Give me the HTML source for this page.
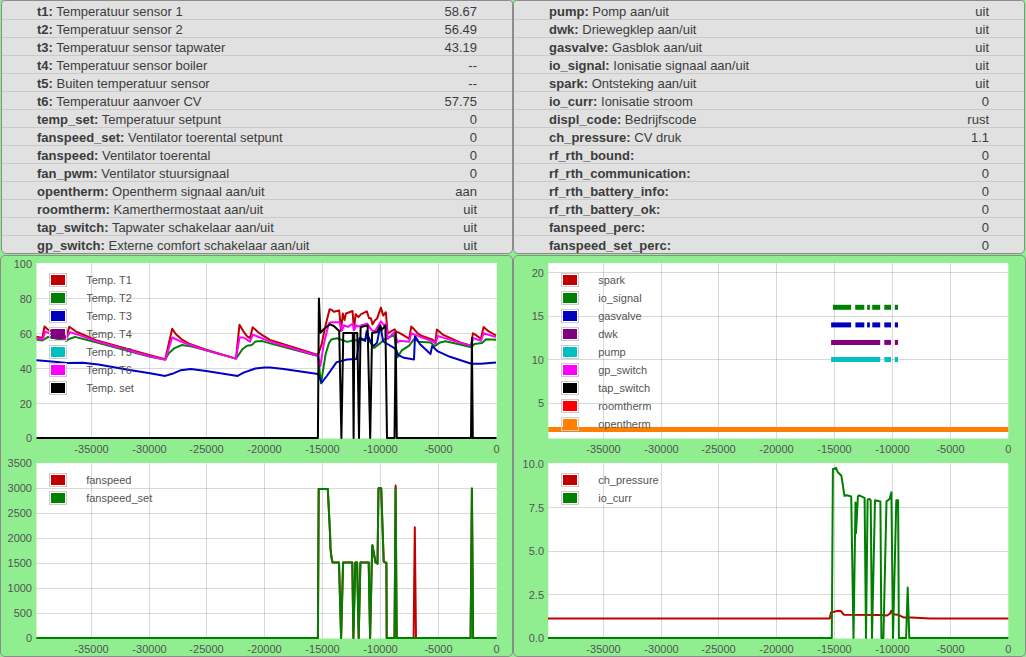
<!DOCTYPE html>
<html><head><meta charset="utf-8"><title>OTGW</title>
<style>
html,body{margin:0;padding:0;width:1026px;height:657px;overflow:hidden;background:#90ee90;}
svg{position:absolute;left:0;top:0;display:block}
.tb{font-family:"Liberation Sans", sans-serif;font-size:13px;fill:#3c3c3c;}
.tk{font-family:"Liberation Sans", sans-serif;font-size:11px;fill:#545454;}
.lg{font-family:"Liberation Sans", sans-serif;font-size:11px;fill:#545454;}
</style></head><body>
<svg width="1026" height="657" viewBox="0 0 1026 657">

<path d="M4.5,0.5 H509.5 Q512.5,0.5 512.5,3.5 V249.0 A4.5,4.5 0 0 1 508.0,253.5 H6.0 A4.5,4.5 0 0 1 1.5,249.0 V3.5 Q1.5,0.5 4.5,0.5 Z" fill="#e1e1e1" stroke="#8c8c8c"/>
<path d="M516.5,0.5 H1021.5 Q1024.5,0.5 1024.5,3.5 V249.0 A4.5,4.5 0 0 1 1020.0,253.5 H518.0 A4.5,4.5 0 0 1 513.5,249.0 V3.5 Q513.5,0.5 516.5,0.5 Z" fill="#e1e1e1" stroke="#8c8c8c"/>
<rect x="0.5" y="255.5" width="512" height="401" rx="4.5" fill="#90ee90" stroke="#8c8c8c"/>
<rect x="513.5" y="255.5" width="512" height="401" rx="4.5" fill="#90ee90" stroke="#8c8c8c"/>
<line x1="2" x2="512" y1="19.5" y2="19.5" stroke="#cacaca"/>
<line x1="514" x2="1024" y1="19.5" y2="19.5" stroke="#cacaca"/>
<line x1="2" x2="512" y1="37.5" y2="37.5" stroke="#cacaca"/>
<line x1="514" x2="1024" y1="37.5" y2="37.5" stroke="#cacaca"/>
<line x1="2" x2="512" y1="55.5" y2="55.5" stroke="#cacaca"/>
<line x1="514" x2="1024" y1="55.5" y2="55.5" stroke="#cacaca"/>
<line x1="2" x2="512" y1="73.5" y2="73.5" stroke="#cacaca"/>
<line x1="514" x2="1024" y1="73.5" y2="73.5" stroke="#cacaca"/>
<line x1="2" x2="512" y1="91.5" y2="91.5" stroke="#cacaca"/>
<line x1="514" x2="1024" y1="91.5" y2="91.5" stroke="#cacaca"/>
<line x1="2" x2="512" y1="109.5" y2="109.5" stroke="#cacaca"/>
<line x1="514" x2="1024" y1="109.5" y2="109.5" stroke="#cacaca"/>
<line x1="2" x2="512" y1="127.5" y2="127.5" stroke="#cacaca"/>
<line x1="514" x2="1024" y1="127.5" y2="127.5" stroke="#cacaca"/>
<line x1="2" x2="512" y1="145.5" y2="145.5" stroke="#cacaca"/>
<line x1="514" x2="1024" y1="145.5" y2="145.5" stroke="#cacaca"/>
<line x1="2" x2="512" y1="163.5" y2="163.5" stroke="#cacaca"/>
<line x1="514" x2="1024" y1="163.5" y2="163.5" stroke="#cacaca"/>
<line x1="2" x2="512" y1="181.5" y2="181.5" stroke="#cacaca"/>
<line x1="514" x2="1024" y1="181.5" y2="181.5" stroke="#cacaca"/>
<line x1="2" x2="512" y1="199.5" y2="199.5" stroke="#cacaca"/>
<line x1="514" x2="1024" y1="199.5" y2="199.5" stroke="#cacaca"/>
<line x1="2" x2="512" y1="217.5" y2="217.5" stroke="#cacaca"/>
<line x1="514" x2="1024" y1="217.5" y2="217.5" stroke="#cacaca"/>
<line x1="2" x2="512" y1="235.5" y2="235.5" stroke="#cacaca"/>
<line x1="514" x2="1024" y1="235.5" y2="235.5" stroke="#cacaca"/>
<text x="37" y="15.6" class="tb"><tspan font-weight="bold">t1:</tspan> Temperatuur sensor 1</text>
<text x="477" y="15.6" class="tb" text-anchor="end">58.67</text>
<text x="37" y="33.6" class="tb"><tspan font-weight="bold">t2:</tspan> Temperatuur sensor 2</text>
<text x="477" y="33.6" class="tb" text-anchor="end">56.49</text>
<text x="37" y="51.6" class="tb"><tspan font-weight="bold">t3:</tspan> Temperatuur sensor tapwater</text>
<text x="477" y="51.6" class="tb" text-anchor="end">43.19</text>
<text x="37" y="69.6" class="tb"><tspan font-weight="bold">t4:</tspan> Temperatuur sensor boiler</text>
<text x="477" y="69.6" class="tb" text-anchor="end">--</text>
<text x="37" y="87.6" class="tb"><tspan font-weight="bold">t5:</tspan> Buiten temperatuur sensor</text>
<text x="477" y="87.6" class="tb" text-anchor="end">--</text>
<text x="37" y="105.6" class="tb"><tspan font-weight="bold">t6:</tspan> Temperatuur aanvoer CV</text>
<text x="477" y="105.6" class="tb" text-anchor="end">57.75</text>
<text x="37" y="123.6" class="tb"><tspan font-weight="bold">temp_set:</tspan> Temperatuur setpunt</text>
<text x="477" y="123.6" class="tb" text-anchor="end">0</text>
<text x="37" y="141.6" class="tb"><tspan font-weight="bold">fanspeed_set:</tspan> Ventilator toerental setpunt</text>
<text x="477" y="141.6" class="tb" text-anchor="end">0</text>
<text x="37" y="159.6" class="tb"><tspan font-weight="bold">fanspeed:</tspan> Ventilator toerental</text>
<text x="477" y="159.6" class="tb" text-anchor="end">0</text>
<text x="37" y="177.6" class="tb"><tspan font-weight="bold">fan_pwm:</tspan> Ventilator stuursignaal</text>
<text x="477" y="177.6" class="tb" text-anchor="end">0</text>
<text x="37" y="195.6" class="tb"><tspan font-weight="bold">opentherm:</tspan> Opentherm signaal aan/uit</text>
<text x="477" y="195.6" class="tb" text-anchor="end">aan</text>
<text x="37" y="213.6" class="tb"><tspan font-weight="bold">roomtherm:</tspan> Kamerthermostaat aan/uit</text>
<text x="477" y="213.6" class="tb" text-anchor="end">uit</text>
<text x="37" y="231.6" class="tb"><tspan font-weight="bold">tap_switch:</tspan> Tapwater schakelaar aan/uit</text>
<text x="477" y="231.6" class="tb" text-anchor="end">uit</text>
<text x="37" y="249.6" class="tb"><tspan font-weight="bold">gp_switch:</tspan> Externe comfort schakelaar aan/uit</text>
<text x="477" y="249.6" class="tb" text-anchor="end">uit</text>
<text x="549" y="15.6" class="tb"><tspan font-weight="bold">pump:</tspan> Pomp aan/uit</text>
<text x="989" y="15.6" class="tb" text-anchor="end">uit</text>
<text x="549" y="33.6" class="tb"><tspan font-weight="bold">dwk:</tspan> Driewegklep aan/uit</text>
<text x="989" y="33.6" class="tb" text-anchor="end">uit</text>
<text x="549" y="51.6" class="tb"><tspan font-weight="bold">gasvalve:</tspan> Gasblok aan/uit</text>
<text x="989" y="51.6" class="tb" text-anchor="end">uit</text>
<text x="549" y="69.6" class="tb"><tspan font-weight="bold">io_signal:</tspan> Ionisatie signaal aan/uit</text>
<text x="989" y="69.6" class="tb" text-anchor="end">uit</text>
<text x="549" y="87.6" class="tb"><tspan font-weight="bold">spark:</tspan> Ontsteking aan/uit</text>
<text x="989" y="87.6" class="tb" text-anchor="end">uit</text>
<text x="549" y="105.6" class="tb"><tspan font-weight="bold">io_curr:</tspan> Ionisatie stroom</text>
<text x="989" y="105.6" class="tb" text-anchor="end">0</text>
<text x="549" y="123.6" class="tb"><tspan font-weight="bold">displ_code:</tspan> Bedrijfscode</text>
<text x="989" y="123.6" class="tb" text-anchor="end">rust</text>
<text x="549" y="141.6" class="tb"><tspan font-weight="bold">ch_pressure:</tspan> CV druk</text>
<text x="989" y="141.6" class="tb" text-anchor="end">1.1</text>
<text x="549" y="159.6" class="tb"><tspan font-weight="bold">rf_rth_bound:</tspan> </text>
<text x="989" y="159.6" class="tb" text-anchor="end">0</text>
<text x="549" y="177.6" class="tb"><tspan font-weight="bold">rf_rth_communication:</tspan> </text>
<text x="989" y="177.6" class="tb" text-anchor="end">0</text>
<text x="549" y="195.6" class="tb"><tspan font-weight="bold">rf_rth_battery_info:</tspan> </text>
<text x="989" y="195.6" class="tb" text-anchor="end">0</text>
<text x="549" y="213.6" class="tb"><tspan font-weight="bold">rf_rth_battery_ok:</tspan> </text>
<text x="989" y="213.6" class="tb" text-anchor="end">0</text>
<text x="549" y="231.6" class="tb"><tspan font-weight="bold">fanspeed_perc:</tspan> </text>
<text x="989" y="231.6" class="tb" text-anchor="end">0</text>
<text x="549" y="249.6" class="tb"><tspan font-weight="bold">fanspeed_set_perc:</tspan> </text>
<text x="989" y="249.6" class="tb" text-anchor="end">0</text>
<rect x="36.5" y="263" width="460.3" height="175.5" fill="#fff"/>
<line x1="91.5" x2="91.5" y1="263" y2="438.5" stroke="rgba(0,0,0,0.15)"/>
<line x1="149.5" x2="149.5" y1="263" y2="438.5" stroke="rgba(0,0,0,0.15)"/>
<line x1="206.5" x2="206.5" y1="263" y2="438.5" stroke="rgba(0,0,0,0.15)"/>
<line x1="264.5" x2="264.5" y1="263" y2="438.5" stroke="rgba(0,0,0,0.15)"/>
<line x1="322.5" x2="322.5" y1="263" y2="438.5" stroke="rgba(0,0,0,0.15)"/>
<line x1="380.5" x2="380.5" y1="263" y2="438.5" stroke="rgba(0,0,0,0.15)"/>
<line x1="438.5" x2="438.5" y1="263" y2="438.5" stroke="rgba(0,0,0,0.15)"/>
<line x1="36.5" x2="496.8" y1="298.5" y2="298.5" stroke="rgba(0,0,0,0.15)"/>
<line x1="36.5" x2="496.8" y1="333.5" y2="333.5" stroke="rgba(0,0,0,0.15)"/>
<line x1="36.5" x2="496.8" y1="368.5" y2="368.5" stroke="rgba(0,0,0,0.15)"/>
<line x1="36.5" x2="496.8" y1="403.5" y2="403.5" stroke="rgba(0,0,0,0.15)"/>
<text x="91.5" y="453" class="tk" text-anchor="middle">-35000</text>
<text x="149.5" y="453" class="tk" text-anchor="middle">-30000</text>
<text x="206.5" y="453" class="tk" text-anchor="middle">-25000</text>
<text x="264.5" y="453" class="tk" text-anchor="middle">-20000</text>
<text x="322.5" y="453" class="tk" text-anchor="middle">-15000</text>
<text x="380.5" y="453" class="tk" text-anchor="middle">-10000</text>
<text x="438.5" y="453" class="tk" text-anchor="middle">-5000</text>
<text x="496.5" y="453" class="tk" text-anchor="middle">0</text>
<text x="32" y="268.0" class="tk" text-anchor="end">100</text>
<text x="32" y="303.0" class="tk" text-anchor="end">80</text>
<text x="32" y="338.0" class="tk" text-anchor="end">60</text>
<text x="32" y="373.0" class="tk" text-anchor="end">40</text>
<text x="32" y="408.0" class="tk" text-anchor="end">20</text>
<text x="32" y="442.0" class="tk" text-anchor="end">0</text>
<path d="M36.5,336.7 L42.4,337.9 L44.5,326.5 L48.6,330.2 L50.5,330.8 L65.4,337.5 L67.2,334.1 L69.3,326.8 L75.0,330.8 L76.9,332.0 L96.0,340.2 L150.0,355.1 L165.2,359.2 L172.2,328.8 L175.7,334.0 L181.6,339.3 L189.8,344.0 L206.1,349.8 L236.0,358.6 L239.5,324.7 L243.6,331.7 L247.1,336.4 L250.0,338.1 L252.7,327.3 L257.6,331.7 L262.3,335.2 L270.0,339.9 L317.9,354.9 L317.9,354.9 L321.6,344.4 L325.4,326.0 L329.6,309.3 L332.1,310.1 L333.8,311.8 L339.2,310.5 L341.0,331.0 L342.8,313.5 L344.5,320.0 L346.0,313.5 L350.0,312.0 L352.5,311.0 L354.0,330.0 L355.6,314.3 L358.4,317.1 L361.1,314.1 L366.8,311.4 L369.1,318.3 L371.0,318.3 L372.5,324.4 L374.8,320.5 L377.1,318.6 L380.9,307.6 L383.2,315.6 L385.8,312.2 L387.7,333.5 L390.0,332.0 L394.6,329.3 L396.5,332.0 L398.5,332.3 L409.2,338.6 L411.3,326.4 L417.7,333.3 L422.0,336.0 L432.6,339.7 L435.3,342.9 L436.9,329.6 L443.3,334.9 L460.0,342.4 L471.3,345.6 L472.9,333.3 L475.6,334.9 L480.9,338.7 L483.6,326.9 L488.4,331.2 L496.0,335.5" fill="none" stroke="#c00000" stroke-width="2" stroke-linejoin="round" stroke-linecap="butt"/>
<path d="M36.5,339.6 L42.4,340.5 L45.0,339.0 L48.0,336.9 L50.5,337.2 L58.7,339.3 L64.5,339.9 L66.3,340.8 L69.3,339.0 L75.0,336.9 L96.0,342.3 L150.0,356.8 L165.2,359.5 L169.0,353.0 L174.6,348.1 L181.6,345.1 L190.9,346.3 L206.1,350.4 L236.0,358.6 L242.4,349.2 L247.1,345.7 L251.8,345.1 L255.3,341.6 L262.3,341.1 L270.0,343.4 L317.9,356.0 L317.9,356.0 L321.0,383.3 L325.7,353.7 L328.8,343.6 L331.3,339.4 L337.1,338.2 L347.2,341.9 L353.9,340.3 L362.0,340.3 L367.3,337.7 L374.0,348.0 L380.1,343.4 L383.9,339.6 L394.3,335.2 L397.5,357.3 L401.7,350.4 L409.2,345.6 L414.5,338.6 L418.8,341.8 L430.5,342.4 L434.7,346.1 L440.1,342.4 L445.4,341.3 L460.0,344.5 L471.3,347.2 L474.5,344.0 L482.0,342.9 L486.2,339.2 L496.0,339.7" fill="none" stroke="#008000" stroke-width="2" stroke-linejoin="round" stroke-linecap="butt"/>
<path d="M36.5,360.2 L51.6,361.5 L67.2,363.0 L82.8,362.7 L98.4,364.6 L129.6,370.0 L150.0,373.2 L165.2,375.9 L172.2,373.8 L180.4,370.3 L190.9,369.1 L206.1,370.9 L237.7,375.9 L243.6,372.6 L255.3,368.5 L264.6,367.4 L270.0,367.4 L283.6,369.0 L317.9,374.0 L317.9,374.0 L321.8,382.5 L327.2,375.5 L336.6,362.2 L340.7,361.1 L347.0,359.5 L356.6,359.0 L359.6,338.0 L362.0,338.8 L365.2,340.9 L366.6,331.3 L369.0,338.0 L372.6,345.2 L374.0,345.7 L377.1,342.6 L380.3,325.4 L383.2,341.5 L395.3,348.7 L398.5,355.2 L403.9,357.8 L414.0,359.4 L415.0,336.0 L419.8,344.0 L430.5,354.1 L432.1,346.1 L437.9,351.4 L450.0,356.8 L471.3,363.7 L480.9,363.7 L496.0,362.6" fill="none" stroke="#0000c0" stroke-width="2" stroke-linejoin="round" stroke-linecap="butt"/>
<path d="M36.5,337.9 L43.0,339.3 L45.0,331.7 L48.6,332.9 L50.5,333.8 L64.5,339.3 L66.3,339.0 L69.9,332.3 L75.0,333.8 L76.9,334.4 L96.0,341.1 L150.0,356.3 L165.2,359.8 L172.2,337.5 L183.9,342.8 L206.1,350.4 L236.0,358.6 L239.5,337.5 L243.6,337.5 L250.0,341.6 L252.7,334.6 L270.0,341.6 L317.9,355.7 L317.9,355.7 L320.3,366.2 L323.7,344.4 L328.8,323.5 L331.3,322.2 L339.6,322.2 L342.2,330.2 L343.8,325.2 L348.0,326.9 L353.0,323.5 L353.9,330.2 L356.4,325.2 L358.0,326.6 L361.8,325.1 L367.2,323.6 L371.7,330.4 L374.8,331.2 L380.9,321.3 L383.9,325.1 L386.2,324.0 L387.7,338.8 L390.8,335.8 L394.6,332.0 L397.6,342.6 L399.6,340.8 L409.2,341.8 L411.3,333.3 L415.6,334.9 L422.0,337.6 L432.6,341.3 L435.8,343.4 L437.4,336.0 L443.3,337.6 L460.0,342.9 L470.8,345.6 L473.5,338.1 L480.9,340.8 L483.6,333.3 L496.0,337.1" fill="none" stroke="#ff00ff" stroke-width="2" stroke-linejoin="round" stroke-linecap="butt"/>
<path d="M36.5,438.0 L317.9,438.0 L318.9,298.4 L320.4,332.7 L324.6,328.5 L330.0,324.3 L333.8,326.0 L339.2,331.0 L341.4,438.0 L343.3,333.1 L352.8,333.1 L353.6,438.0 L354.3,333.1 L357.3,333.1 L359.0,438.0 L360.6,327.5 L362.6,326.6 L367.6,325.5 L370.2,438.0 L372.1,333.1 L377.0,332.0 L380.1,325.5 L381.3,330.4 L385.4,325.5 L387.0,438.0 L394.5,438.0 L395.7,333.1 L396.8,438.0 L471.0,438.0 L471.9,338.1 L472.8,438.0 L496.5,438.0" fill="none" stroke="#000" stroke-width="2" stroke-linejoin="round" stroke-linecap="butt"/>
<rect x="49.5" y="273.5" width="17" height="13" fill="none" stroke="#ccc"/>
<rect x="51" y="275" width="14" height="10" fill="#c00000"/>
<text x="86.2" y="283.6" class="lg">Temp. T1</text>
<rect x="49.5" y="291.5" width="17" height="13" fill="none" stroke="#ccc"/>
<rect x="51" y="293" width="14" height="10" fill="#008000"/>
<text x="86.2" y="301.6" class="lg">Temp. T2</text>
<rect x="49.5" y="309.5" width="17" height="13" fill="none" stroke="#ccc"/>
<rect x="51" y="311" width="14" height="10" fill="#0000c0"/>
<text x="86.2" y="319.6" class="lg">Temp. T3</text>
<rect x="49.5" y="327.5" width="17" height="13" fill="none" stroke="#ccc"/>
<rect x="51" y="329" width="14" height="10" fill="#800080"/>
<text x="86.2" y="337.6" class="lg">Temp. T4</text>
<rect x="49.5" y="345.5" width="17" height="13" fill="none" stroke="#ccc"/>
<rect x="51" y="347" width="14" height="10" fill="#00c0c0"/>
<text x="86.2" y="355.6" class="lg">Temp. T5</text>
<rect x="49.5" y="363.5" width="17" height="13" fill="none" stroke="#ccc"/>
<rect x="51" y="365" width="14" height="10" fill="#ff00ff"/>
<text x="86.2" y="373.6" class="lg">Temp. T6</text>
<rect x="49.5" y="381.5" width="17" height="13" fill="none" stroke="#ccc"/>
<rect x="51" y="383" width="14" height="10" fill="#000"/>
<text x="86.2" y="391.6" class="lg">Temp. set</text>
<rect x="36.5" y="463" width="460.3" height="175.5" fill="#fff"/>
<line x1="91.5" x2="91.5" y1="463" y2="638.5" stroke="rgba(0,0,0,0.15)"/>
<line x1="149.5" x2="149.5" y1="463" y2="638.5" stroke="rgba(0,0,0,0.15)"/>
<line x1="206.5" x2="206.5" y1="463" y2="638.5" stroke="rgba(0,0,0,0.15)"/>
<line x1="264.5" x2="264.5" y1="463" y2="638.5" stroke="rgba(0,0,0,0.15)"/>
<line x1="322.5" x2="322.5" y1="463" y2="638.5" stroke="rgba(0,0,0,0.15)"/>
<line x1="380.5" x2="380.5" y1="463" y2="638.5" stroke="rgba(0,0,0,0.15)"/>
<line x1="438.5" x2="438.5" y1="463" y2="638.5" stroke="rgba(0,0,0,0.15)"/>
<line x1="36.5" x2="496.8" y1="613.5" y2="613.5" stroke="rgba(0,0,0,0.15)"/>
<line x1="36.5" x2="496.8" y1="588.5" y2="588.5" stroke="rgba(0,0,0,0.15)"/>
<line x1="36.5" x2="496.8" y1="563.5" y2="563.5" stroke="rgba(0,0,0,0.15)"/>
<line x1="36.5" x2="496.8" y1="538.5" y2="538.5" stroke="rgba(0,0,0,0.15)"/>
<line x1="36.5" x2="496.8" y1="513.5" y2="513.5" stroke="rgba(0,0,0,0.15)"/>
<line x1="36.5" x2="496.8" y1="488.5" y2="488.5" stroke="rgba(0,0,0,0.15)"/>
<text x="91.5" y="653" class="tk" text-anchor="middle">-35000</text>
<text x="149.5" y="653" class="tk" text-anchor="middle">-30000</text>
<text x="206.5" y="653" class="tk" text-anchor="middle">-25000</text>
<text x="264.5" y="653" class="tk" text-anchor="middle">-20000</text>
<text x="322.5" y="653" class="tk" text-anchor="middle">-15000</text>
<text x="380.5" y="653" class="tk" text-anchor="middle">-10000</text>
<text x="438.5" y="653" class="tk" text-anchor="middle">-5000</text>
<text x="496.5" y="653" class="tk" text-anchor="middle">0</text>
<text x="32" y="642.0" class="tk" text-anchor="end">0</text>
<text x="32" y="617.0" class="tk" text-anchor="end">500</text>
<text x="32" y="592.0" class="tk" text-anchor="end">1000</text>
<text x="32" y="567.0" class="tk" text-anchor="end">1500</text>
<text x="32" y="542.0" class="tk" text-anchor="end">2000</text>
<text x="32" y="517.0" class="tk" text-anchor="end">2500</text>
<text x="32" y="492.0" class="tk" text-anchor="end">3000</text>
<text x="32" y="467.0" class="tk" text-anchor="end">3500</text>
<path d="M36.5,638.0 L317.9,638.0 L318.7,488.9 L327.8,488.9 L330.1,535.0 L330.5,548.6 L331.5,557.5 L332.6,562.6 L339.0,562.6 L341.1,638.0 L343.1,562.6 L352.3,562.6 L353.4,638.0 L355.3,562.6 L357.1,562.6 L358.7,638.0 L360.4,562.6 L368.7,562.6 L370.1,638.0 L371.8,562.6 L372.4,545.2 L375.5,562.3 L377.5,563.6 L378.5,488.2 L381.2,488.2 L383.7,561.6 L386.4,563.0 L386.7,638.0 L394.5,638.0 L395.6,485.5 L396.7,638.0 L413.6,638.0 L414.8,527.2 L416.0,638.0 L470.6,638.0 L471.9,488.5 L473.1,638.0 L496.5,638.0" fill="none" stroke="#c00000" stroke-width="2" stroke-linejoin="round" stroke-linecap="butt"/>
<path d="M36.5,638.0 L317.9,638.0 L318.7,488.9 L327.8,488.9 L330.1,535.0 L330.5,548.6 L331.5,557.5 L332.6,562.6 L339.0,562.6 L341.1,638.0 L343.1,562.6 L352.3,562.6 L353.4,638.0 L355.3,562.6 L357.1,562.6 L358.7,638.0 L360.4,562.6 L368.7,562.6 L370.1,638.0 L371.8,562.6 L372.4,545.2 L375.5,562.3 L377.5,563.6 L378.5,488.2 L381.2,488.2 L383.7,561.6 L386.4,563.0 L386.7,638.0 L394.5,638.0 L395.6,488.0 L396.7,638.0 L470.6,638.0 L471.9,488.5 L473.1,638.0 L496.5,638.0" fill="none" stroke="#008000" stroke-width="2" stroke-linejoin="round" stroke-linecap="butt"/>
<rect x="49.5" y="473.5" width="17" height="13" fill="none" stroke="#ccc"/>
<rect x="51" y="475" width="14" height="10" fill="#c00000"/>
<text x="86.2" y="483.6" class="lg">fanspeed</text>
<rect x="49.5" y="491.5" width="17" height="13" fill="none" stroke="#ccc"/>
<rect x="51" y="493" width="14" height="10" fill="#008000"/>
<text x="86.2" y="501.6" class="lg">fanspeed_set</text>
<rect x="548.3" y="263" width="460.0" height="175.5" fill="#fff"/>
<line x1="603.5" x2="603.5" y1="263" y2="438.5" stroke="rgba(0,0,0,0.15)"/>
<line x1="661.5" x2="661.5" y1="263" y2="438.5" stroke="rgba(0,0,0,0.15)"/>
<line x1="718.5" x2="718.5" y1="263" y2="438.5" stroke="rgba(0,0,0,0.15)"/>
<line x1="776.5" x2="776.5" y1="263" y2="438.5" stroke="rgba(0,0,0,0.15)"/>
<line x1="834.5" x2="834.5" y1="263" y2="438.5" stroke="rgba(0,0,0,0.15)"/>
<line x1="892.5" x2="892.5" y1="263" y2="438.5" stroke="rgba(0,0,0,0.15)"/>
<line x1="950.5" x2="950.5" y1="263" y2="438.5" stroke="rgba(0,0,0,0.15)"/>
<line x1="548.3" x2="1008.3" y1="403.5" y2="403.5" stroke="rgba(0,0,0,0.15)"/>
<line x1="548.3" x2="1008.3" y1="359.5" y2="359.5" stroke="rgba(0,0,0,0.15)"/>
<line x1="548.3" x2="1008.3" y1="316.5" y2="316.5" stroke="rgba(0,0,0,0.15)"/>
<line x1="548.3" x2="1008.3" y1="272.5" y2="272.5" stroke="rgba(0,0,0,0.15)"/>
<text x="603.5" y="453" class="tk" text-anchor="middle">-35000</text>
<text x="661.5" y="453" class="tk" text-anchor="middle">-30000</text>
<text x="718.5" y="453" class="tk" text-anchor="middle">-25000</text>
<text x="776.5" y="453" class="tk" text-anchor="middle">-20000</text>
<text x="834.5" y="453" class="tk" text-anchor="middle">-15000</text>
<text x="892.5" y="453" class="tk" text-anchor="middle">-10000</text>
<text x="950.5" y="453" class="tk" text-anchor="middle">-5000</text>
<text x="1008.3" y="453" class="tk" text-anchor="middle">0</text>
<text x="544" y="277" class="tk" text-anchor="end">20</text><text x="544" y="320" class="tk" text-anchor="end">15</text><text x="544" y="364" class="tk" text-anchor="end">10</text><text x="544" y="407" class="tk" text-anchor="end">5</text>
<line x1="548.3" x2="1008.3" y1="429.5" y2="429.5" stroke="#ff8000" stroke-width="5"/>
<line x1="832.9" x2="851.1" y1="307.3" y2="307.3" stroke="#008000" stroke-width="5"/>
<line x1="855.2" x2="864.3" y1="307.3" y2="307.3" stroke="#008000" stroke-width="5"/>
<line x1="867.1" x2="869.9" y1="307.3" y2="307.3" stroke="#008000" stroke-width="5"/>
<line x1="872.2" x2="880.2" y1="307.3" y2="307.3" stroke="#008000" stroke-width="5"/>
<line x1="884.3" x2="891" y1="307.3" y2="307.3" stroke="#008000" stroke-width="5"/>
<line x1="894.8" x2="898" y1="307.3" y2="307.3" stroke="#008000" stroke-width="5"/>
<line x1="831.1" x2="851.1" y1="324.9" y2="324.9" stroke="#0000c0" stroke-width="5"/>
<line x1="855.4" x2="864.3" y1="324.9" y2="324.9" stroke="#0000c0" stroke-width="5"/>
<line x1="867.1" x2="869.9" y1="324.9" y2="324.9" stroke="#0000c0" stroke-width="5"/>
<line x1="872.3" x2="880.2" y1="324.9" y2="324.9" stroke="#0000c0" stroke-width="5"/>
<line x1="884.3" x2="891" y1="324.9" y2="324.9" stroke="#0000c0" stroke-width="5"/>
<line x1="894.8" x2="898" y1="324.9" y2="324.9" stroke="#0000c0" stroke-width="5"/>
<line x1="831.1" x2="880.2" y1="342.4" y2="342.4" stroke="#800080" stroke-width="5"/>
<line x1="884.3" x2="891" y1="342.4" y2="342.4" stroke="#800080" stroke-width="5"/>
<line x1="894.8" x2="898" y1="342.4" y2="342.4" stroke="#800080" stroke-width="5"/>
<line x1="831.1" x2="880.2" y1="359.5" y2="359.5" stroke="#00c0c0" stroke-width="5"/>
<line x1="884.3" x2="891" y1="359.5" y2="359.5" stroke="#00c0c0" stroke-width="5"/>
<line x1="894.8" x2="898" y1="359.5" y2="359.5" stroke="#00c0c0" stroke-width="5"/>
<rect x="561.5" y="273.5" width="17" height="13" fill="none" stroke="#ccc"/>
<rect x="563" y="275" width="14" height="10" fill="#c00000"/>
<text x="598.2" y="283.6" class="lg">spark</text>
<rect x="561.5" y="291.5" width="17" height="13" fill="none" stroke="#ccc"/>
<rect x="563" y="293" width="14" height="10" fill="#008000"/>
<text x="598.2" y="301.6" class="lg">io_signal</text>
<rect x="561.5" y="309.5" width="17" height="13" fill="none" stroke="#ccc"/>
<rect x="563" y="311" width="14" height="10" fill="#0000c0"/>
<text x="598.2" y="319.6" class="lg">gasvalve</text>
<rect x="561.5" y="327.5" width="17" height="13" fill="none" stroke="#ccc"/>
<rect x="563" y="329" width="14" height="10" fill="#800080"/>
<text x="598.2" y="337.6" class="lg">dwk</text>
<rect x="561.5" y="345.5" width="17" height="13" fill="none" stroke="#ccc"/>
<rect x="563" y="347" width="14" height="10" fill="#00c0c0"/>
<text x="598.2" y="355.6" class="lg">pump</text>
<rect x="561.5" y="363.5" width="17" height="13" fill="none" stroke="#ccc"/>
<rect x="563" y="365" width="14" height="10" fill="#ff00ff"/>
<text x="598.2" y="373.6" class="lg">gp_switch</text>
<rect x="561.5" y="381.5" width="17" height="13" fill="none" stroke="#ccc"/>
<rect x="563" y="383" width="14" height="10" fill="#000"/>
<text x="598.2" y="391.6" class="lg">tap_switch</text>
<rect x="561.5" y="399.5" width="17" height="13" fill="none" stroke="#ccc"/>
<rect x="563" y="401" width="14" height="10" fill="#ff0000"/>
<text x="598.2" y="409.6" class="lg">roomtherm</text>
<rect x="561.5" y="417.5" width="17" height="13" fill="none" stroke="#ccc"/>
<rect x="563" y="419" width="14" height="10" fill="#ff8000"/>
<text x="598.2" y="427.6" class="lg">opentherm</text>
<rect x="548.3" y="463" width="460.0" height="175.5" fill="#fff"/>
<line x1="603.5" x2="603.5" y1="463" y2="638.5" stroke="rgba(0,0,0,0.15)"/>
<line x1="661.5" x2="661.5" y1="463" y2="638.5" stroke="rgba(0,0,0,0.15)"/>
<line x1="718.5" x2="718.5" y1="463" y2="638.5" stroke="rgba(0,0,0,0.15)"/>
<line x1="776.5" x2="776.5" y1="463" y2="638.5" stroke="rgba(0,0,0,0.15)"/>
<line x1="834.5" x2="834.5" y1="463" y2="638.5" stroke="rgba(0,0,0,0.15)"/>
<line x1="892.5" x2="892.5" y1="463" y2="638.5" stroke="rgba(0,0,0,0.15)"/>
<line x1="950.5" x2="950.5" y1="463" y2="638.5" stroke="rgba(0,0,0,0.15)"/>
<line x1="548.3" x2="1008.3" y1="507.5" y2="507.5" stroke="rgba(0,0,0,0.15)"/>
<line x1="548.3" x2="1008.3" y1="551.5" y2="551.5" stroke="rgba(0,0,0,0.15)"/>
<line x1="548.3" x2="1008.3" y1="594.5" y2="594.5" stroke="rgba(0,0,0,0.15)"/>
<text x="603.5" y="653" class="tk" text-anchor="middle">-35000</text>
<text x="661.5" y="653" class="tk" text-anchor="middle">-30000</text>
<text x="718.5" y="653" class="tk" text-anchor="middle">-25000</text>
<text x="776.5" y="653" class="tk" text-anchor="middle">-20000</text>
<text x="834.5" y="653" class="tk" text-anchor="middle">-15000</text>
<text x="892.5" y="653" class="tk" text-anchor="middle">-10000</text>
<text x="950.5" y="653" class="tk" text-anchor="middle">-5000</text>
<text x="1008.3" y="653" class="tk" text-anchor="middle">0</text>
<text x="544" y="642.0" class="tk" text-anchor="end">0.0</text>
<text x="544" y="599.0" class="tk" text-anchor="end">2.5</text>
<text x="544" y="555.0" class="tk" text-anchor="end">5.0</text>
<text x="544" y="512.0" class="tk" text-anchor="end">7.5</text>
<text x="544" y="468.0" class="tk" text-anchor="end">10.0</text>
<path d="M548.0,618.6 L829.7,618.6 L831.0,612.5 L838.3,610.7 L840.7,611.0 L843.8,614.7 L880.9,614.9 L887.0,615.5 L890.0,613.7 L891.3,610.7 L893.1,614.3 L898.0,614.7 L904.0,617.6 L911.4,617.6 L930.0,618.6 L1008.3,618.6" fill="none" stroke="#c00000" stroke-width="2" stroke-linejoin="round" stroke-linecap="butt"/>
<path d="M548.0,638.0 L831.8,638.0 L832.9,469.1 L836.0,467.9 L837.8,472.2 L841.4,475.8 L844.5,495.9 L846.9,495.3 L851.2,496.5 L853.5,638.0 L855.5,502.6 L856.0,533.1 L857.9,496.5 L859.1,495.3 L864.6,497.8 L866.0,638.0 L867.6,499.6 L869.5,499.0 L870.7,500.2 L872.0,638.0 L875.0,500.2 L880.4,501.4 L881.4,638.0 L883.4,638.0 L886.5,501.4 L889.6,499.0 L891.4,492.3 L893.0,638.0 L896.3,500.2 L898.1,500.2 L898.9,638.0 L906.1,638.0 L907.7,587.5 L909.3,638.0 L1008.3,638.0" fill="none" stroke="#008000" stroke-width="2" stroke-linejoin="round" stroke-linecap="butt"/>
<rect x="561.5" y="473.5" width="17" height="13" fill="none" stroke="#ccc"/>
<rect x="563" y="475" width="14" height="10" fill="#c00000"/>
<text x="598.2" y="483.6" class="lg">ch_pressure</text>
<rect x="561.5" y="491.5" width="17" height="13" fill="none" stroke="#ccc"/>
<rect x="563" y="493" width="14" height="10" fill="#008000"/>
<text x="598.2" y="501.6" class="lg">io_curr</text>
</svg></body></html>
